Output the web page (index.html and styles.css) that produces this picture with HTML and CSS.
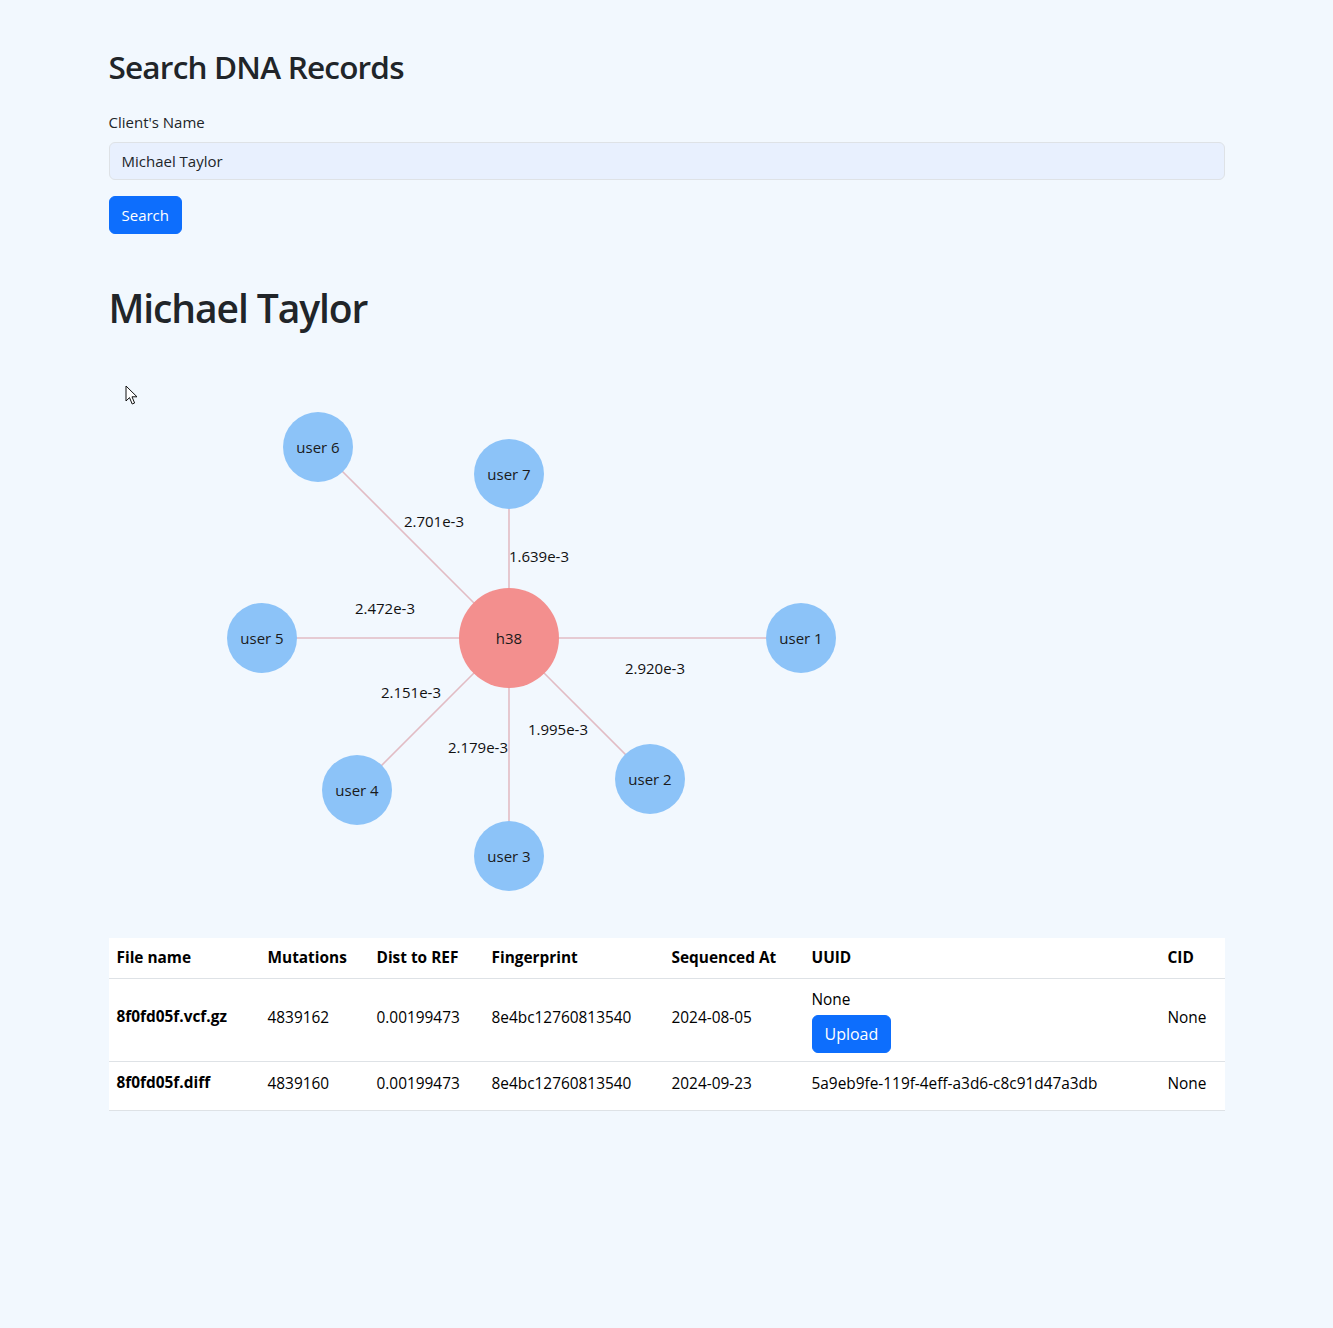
FILE: index.html
```
<!DOCTYPE html>
<html lang="en">
<head>
<meta charset="utf-8">
<title>Search DNA Records</title>
<link rel="stylesheet" href="styles.css">
</head>
<body>
<div class="container">
  <h2 class="title">Search DNA Records</h2>
  <form class="search-form">
    <label class="form-label" for="client">Client's Name</label>
    <input class="form-control" id="client" type="text" value="Michael Taylor">
    <button class="btn btn-primary" type="button">Search</button>
  </form>

  <h1 class="client-name">Michael Taylor</h1>

  <div class="graph">
    <svg class="cursor" width="16" height="22" viewBox="0 0 16 22">
      <path d="M1 1 L1 16 L4.5 12.6 L7.2 19 L9.6 18 L7 11.8 L12 11.8 Z" fill="#fff" stroke="#111" stroke-width="1" stroke-linejoin="round"/>
    </svg>
    <svg class="graph-svg" width="1116" height="598" viewBox="0 0 1116 598">
      <g class="edges">
        <line x1="400" y1="298" x2="209" y2="107"/>
        <line x1="400" y1="298" x2="400" y2="134"/>
        <line x1="400" y1="298" x2="153" y2="298"/>
        <line x1="400" y1="298" x2="692" y2="298"/>
        <line x1="400" y1="298" x2="248" y2="450"/>
        <line x1="400" y1="298" x2="400" y2="516"/>
        <line x1="400" y1="298" x2="541" y2="439"/>
      </g>
      <g class="edge-labels">
        <text x="325" y="181">2.701e-3</text>
        <text x="430" y="216">1.639e-3</text>
        <text x="276" y="268">2.472e-3</text>
        <text x="546" y="328">2.920e-3</text>
        <text x="302" y="352">2.151e-3</text>
        <text x="449" y="389">1.995e-3</text>
        <text x="369" y="407">2.179e-3</text>
      </g>
      <g class="nodes">
        <circle class="center" cx="400" cy="298" r="50"/>
        <text x="400" y="298">h38</text>
        <circle class="user" cx="209" cy="107" r="35"/>
        <text x="209" y="107">user 6</text>
        <circle class="user" cx="400" cy="134" r="35"/>
        <text x="400" y="134">user 7</text>
        <circle class="user" cx="153" cy="298" r="35"/>
        <text x="153" y="298">user 5</text>
        <circle class="user" cx="692" cy="298" r="35"/>
        <text x="692" y="298">user 1</text>
        <circle class="user" cx="248" cy="450" r="35"/>
        <text x="248" y="450">user 4</text>
        <circle class="user" cx="400" cy="516" r="35"/>
        <text x="400" y="516">user 3</text>
        <circle class="user" cx="541" cy="439" r="35"/>
        <text x="541" y="439">user 2</text>
      </g>
    </svg>
  </div>

  <table class="table">
    <colgroup>
      <col class="c1"><col class="c2"><col class="c3"><col class="c4"><col class="c5"><col class="c6"><col class="c7">
    </colgroup>
    <thead>
      <tr>
        <th>File name</th>
        <th>Mutations</th>
        <th>Dist to REF</th>
        <th>Fingerprint</th>
        <th>Sequenced At</th>
        <th>UUID</th>
        <th>CID</th>
      </tr>
    </thead>
    <tbody>
      <tr class="row-tall">
        <th class="fname">8f0fd05f.vcf.gz</th>
        <td>4839162</td>
        <td>0.00199473</td>
        <td>8e4bc12760813540</td>
        <td>2024-08-05</td>
        <td class="uuid-cell">
          <div class="uuid-none">None</div>
          <button class="btn btn-primary btn-upload" type="button">Upload</button>
        </td>
        <td>None</td>
      </tr>
      <tr>
        <th class="fname">8f0fd05f.diff</th>
        <td>4839160</td>
        <td>0.00199473</td>
        <td>8e4bc12760813540</td>
        <td>2024-09-23</td>
        <td>5a9eb9fe-119f-4eff-a3d6-c8c91d47a3db</td>
        <td>None</td>
      </tr>
    </tbody>
  </table>
</div>
</body>
</html>
```

FILE: styles.css
```
* { box-sizing: border-box; }

html, body {
  margin: 0;
  padding: 0;
}

body {
  background: #f2f8fe;
  color: #212529;
  font-family: "Segoe UI", "Open Sans", "Noto Sans", sans-serif;
  font-size: 16px;
  line-height: 1.5;
}

.container {
  width: 1116px;
  margin: 0 auto;
  padding-top: 48px;
  padding-bottom: 200px;
}

.title {
  font-size: 31.5px;
  font-weight: 600;
  line-height: 38px;
  margin: 0 0 24px 0;
  letter-spacing: -0.8px;
}

.search-form {
  display: flex;
  flex-direction: column;
  align-items: flex-start;
}

.form-label {
  font-size: 15px;
  margin-bottom: 8px;
  line-height: 24px;
}

.form-control {
  width: 100%;
  height: 38px;
  padding: 6px 12px;
  font: inherit;
  font-size: 15px;
  color: #212529;
  background: #e8f0fe;
  border: 1px solid #dee2e6;
  border-radius: 6px;
  margin-bottom: 16px;
  outline: none;
}

.btn {
  font: inherit;
  font-size: 15px;
  line-height: 1.5;
  border-radius: 6px;
  border: 1px solid #0d6efd;
  cursor: pointer;
}

.btn-primary {
  background: #0d6efd;
  color: #fff;
  height: 38px;
  padding: 0 12px;
}

.client-name {
  font-size: 39px;
  font-weight: 600;
  line-height: 48px;
  margin: 50px 0 8px 0;
  letter-spacing: -1.1px;
}

.graph {
  position: relative;
  height: 598px;
}

.cursor {
  position: absolute;
  left: 16px;
  top: 45px;
}

.graph-svg {
  display: block;
}

.edges line {
  stroke: #e2bcc4;
  stroke-width: 1.6;
}

.edge-labels text {
  font-size: 15px;
  fill: #111;
  text-anchor: middle;
  dominant-baseline: central;
}

.nodes circle.user {
  fill: #8cc3f8;
}

.nodes circle.center {
  fill: #f38f8e;
}

.nodes text {
  font-size: 15px;
  fill: #1a1a1a;
  text-anchor: middle;
  dominant-baseline: central;
}

.table {
  width: 100%;
  border-collapse: collapse;
  background: #fff;
  table-layout: fixed;
  font-size: 15.4px;
}

.c1 { width: 151px; }
.c2 { width: 109px; }
.c3 { width: 115px; }
.c4 { width: 180px; }
.c5 { width: 140px; }
.c6 { width: 356px; }
.c7 { width: 65px; }

.table th,
.table td {
  padding: 7px 8px 10px 8px;
  text-align: left;
  border-bottom: 1px solid #dee2e6;
  color: #000;
  white-space: nowrap;
}

.table thead th {
  height: 40px;
  font-weight: 700;
  vertical-align: bottom;
  padding-bottom: 8px;
}

.table tbody td,
.table tbody th {
  vertical-align: middle;
}

.table tbody tr {
  height: 49px;
}

.table tbody tr.row-tall {
  height: 83px;
}

.table .fname {
  font-weight: 700;
  padding-bottom: 13px;
}

.table .uuid-cell {
  padding-top: 9px;
  padding-bottom: 8px;
}

.uuid-none {
  line-height: 24px;
  margin-bottom: 3px;
}

.btn-upload {
  height: 38px;
  padding: 0 12px;
  font-size: 16px;
}
```
